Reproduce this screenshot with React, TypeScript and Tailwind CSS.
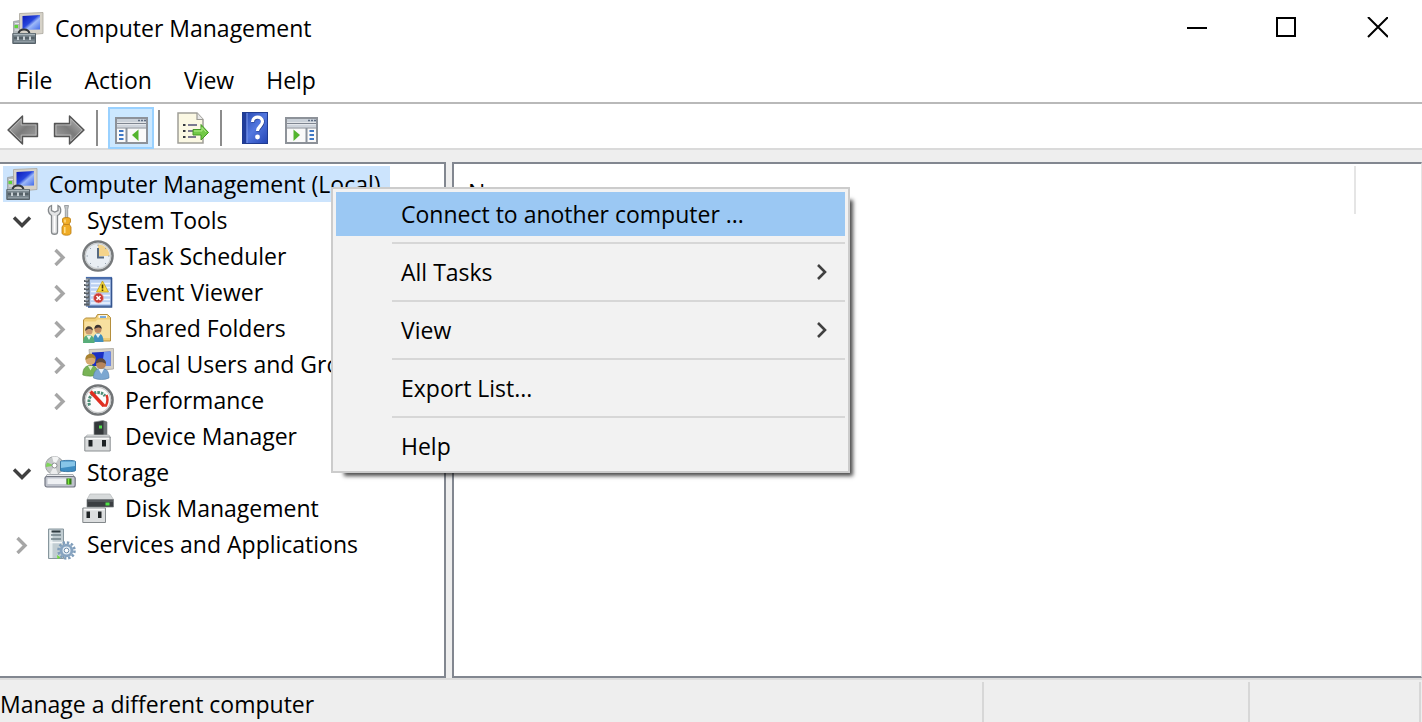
import type { ReactNode } from "react";

function ComputerIcon() {
  return (
    <svg viewBox="0 0 32 32" className="size-8 shrink-0" aria-hidden="true">
      <defs>
        <linearGradient id="screen" x1="0" y1="0" x2="1" y2="1">
          <stop offset="0" stopColor="#0a17b8" />
          <stop offset=".45" stopColor="#2746dc" />
          <stop offset=".6" stopColor="#9db9f8" />
          <stop offset="1" stopColor="#3f68ea" />
        </linearGradient>
      </defs>
      <path d="M1.500 9.500l6-1v14h-6z" fill="#b4babd" stroke="#8d9498" strokeWidth=".7" />
      <path d="M3 11.500h4M3 18h4" stroke="#e4e8ea" />
      <rect x="2.500" y="13" width="3.500" height="3" fill="#5fd53a" />
      <path d="M7.500 1.500L31 .5V21.500L20 22.500L7.500 21z" fill="#d6d2c8" stroke="#aaa69c" strokeWidth=".8" />
      <path d="M10.500 4L28 3V17.500L10.500 18z" fill="url(#screen)" />
      <path d="M6.500 21.500c1-5.500 10-5.500 11 0" fill="none" stroke="#33373a" strokeWidth="2" />
      <path d="M.8 21.500h22.700v10H.8z" fill="#6f7c84" stroke="#566168" />
      <path d="M1.500 22.500h21.500" stroke="#a9b5bb" strokeWidth="1.500" />
      <path d="M2 26h20.500" stroke="#4c585f" strokeWidth="1.500" />
      <path d="M6 24.500v3.500M12 24.500v3.500M18 24.500v3.500" stroke="#d3dbdf" strokeWidth="1.800" />
      <path d="M2 29.500h20.500" stroke="#8f9ba2" strokeWidth="1.500" />
    </svg>
  );
}

function ToolsIcon() {
  return (
    <svg viewBox="0 0 32 32" className="size-8 shrink-0" aria-hidden="true">
      <path
        d="M7.500 1.500C5 2.500 4 5 4.500 7.500c.5 2.500 2 3.500 3 4V28c0 3 6 3 6 0V11.500c2-1 3.500-3 3.200-6C16.500 3.500 15.500 2 14 1.500v5L10.800 8 7.500 6.500z"
        fill="#e3e4e5"
        stroke="#85898c"
        strokeWidth="1.300"
      />
      <path d="M10.500 12v16" stroke="#fff" strokeWidth="1.500" />
      <path d="M20.500 1.500h4l-.8 4v8h-2.400v-8z" fill="#c4c8ca" stroke="#8a8e91" strokeWidth=".8" />
      <path d="M18.500 15c0-2 8-2 8 0v3L25 20l2 3v6c0 3-9 3-9 0v-6l2-3-1.500-2z" fill="#f0ac26" stroke="#b97c12" strokeWidth=".8" />
      <path d="M21 15.500v3M20.800 23v6" stroke="#ffe08a" strokeWidth="1.500" />
      <path d="M19.500 20.500h6" stroke="#c8861a" />
    </svg>
  );
}

function ClockIcon() {
  return (
    <svg viewBox="0 0 32 32" className="size-8 shrink-0" aria-hidden="true">
      <circle cx="16" cy="16" r="14.500" fill="#e9eef3" stroke="#76797b" strokeWidth="2.600" />
      <circle cx="16" cy="16" r="12.700" fill="none" stroke="#c9cccd" strokeWidth="1.200" />
      <path d="M16 16V4.500A11.500 11.500 0 0 1 27.500 16z" fill="#f4d38a" />
      <path d="M16 8V17.500H22" fill="none" stroke="#56697f" strokeWidth="2" />
      <path d="M16 4.500v1.500M16 26v1.500M4.500 16H6M26 16h1.500M8 8l1 1M23 23l1 1M8 24l1-1M24 8l-1 1" stroke="#98a4b1" />
    </svg>
  );
}

function EventIcon() {
  return (
    <svg viewBox="0 0 32 32" className="size-8 shrink-0" aria-hidden="true">
      <rect x="4.500" y="1.500" width="25" height="28.500" fill="#b9cff2" stroke="#456aa9" strokeWidth="1.200" />
      <path d="M5 2.500h24" stroke="#4c6fae" strokeWidth="2" />
      <path d="M9 7.500h19M9 11.500h19M9 15.500h19M9 19.500h19M9 23.500h19M9 27h19" stroke="#eef5ff" strokeWidth="1.500" />
      <path d="M29.500 2v29H6" fill="none" stroke="#35558e" strokeWidth="1.500" />
      <rect x="4" y="2" width="4" height="28" fill="#768495" />
      <path d="M2 5h5M2 9h5M2 13h5M2 17h5M2 21h5M2 25h5M2 28.500h5" stroke="#5b6167" strokeWidth="1.800" />
      <path d="M3 4h3M3 8h3M3 12h3M3 16h3M3 20h3M3 24h3" stroke="#e3e6e8" strokeWidth=".8" />
      <path d="M20.500 5L26.500 16h-12z" fill="#f8db3c" stroke="#c39f1d" strokeWidth=".8" />
      <path d="M20.500 8.500v4M20.500 13.500v1.500" stroke="#4b3d09" strokeWidth="1.600" />
      <circle cx="16.500" cy="22" r="5" fill="#cb3935" stroke="#e4a5a2" strokeWidth=".8" />
      <path d="M14.500 20l4 4m0-4l-4 4" stroke="#fff" strokeWidth="1.600" />
    </svg>
  );
}

function SharedIcon() {
  return (
    <svg viewBox="0 0 32 32" className="size-8 shrink-0" aria-hidden="true">
      <path d="M1.500 8l2-2h10l2-3.500h10l3 3V29h-27z" fill="#f0ce77" stroke="#b58f3d" />
      <path d="M16.500 4.500h8.500" stroke="#fff" strokeWidth="2.500" />
      <path d="M18 5h6" stroke="#4b8fd6" strokeWidth="1.500" />
      <path d="M2.500 9.500h11l2-2H28V26H2.500z" fill="#f8e0a0" />
      <path d="M11 30c0-6 2-8.500 5-8.500s5.500 2 5.500 8.500z" fill="#418fbe" />
      <path d="M13.500 22l2.500 4 2.500-4z" fill="#e8f2f8" />
      <circle cx="16" cy="17.500" r="3.500" fill="#c08b63" />
      <path d="M12.300 17c0-6 7.500-5.500 7.500 0-2-2-5-2-7.500 0z" fill="#3a3230" />
      <path d="M1 31c0-6 2.500-8 5.800-8s5.800 2.500 5.800 8z" fill="#58ad7a" />
      <path d="M4.500 23.500L7 28l2.500-4.500z" fill="#eaf7ee" />
      <circle cx="7" cy="19" r="3.600" fill="#c99a72" />
      <path d="M3.200 19c-.5-6.500 7.500-6 7.800-.5-2-2-5-2.500-7.800.5z" fill="#49403a" />
    </svg>
  );
}

function UsersIcon() {
  return (
    <svg viewBox="0 0 32 32" className="size-8 shrink-0" aria-hidden="true">
      <path d="M7 1.500L31.500 .5V21L9 23z" fill="#d5d1c8" stroke="#aaa69e" strokeWidth=".8" />
      <path d="M10 4.500L28.500 3.500V18H10z" fill="#1b2fc4" />
      <path d="M22 4l6.500-.5V18H20z" fill="#6e94f2" />
      <path d="M.8 27c0-7 3-9.500 7.500-9.500s7.500 2 7.500 9.500c-4 1.500-11 1.500-15 0z" fill="#78b355" stroke="#528938" strokeWidth=".6" />
      <path d="M6 18l2.500 4.500L11 18z" fill="#dff0d0" />
      <circle cx="8.500" cy="12" r="5" fill="#d8aa72" />
      <path d="M3.500 12c-1-8 10.500-8.500 10.500-.5-3-2.500-6.500-2.500-10.500.5z" fill="#a98332" />
      <path d="M11.500 30c0-6.500 2.500-9.500 8-9.500s7.500 3 7.500 9.500c-4 2-11 2-15.500 0z" fill="#7ba7d1" stroke="#547fa9" strokeWidth=".6" />
      <path d="M16.500 21l2.800 5 2.700-5z" fill="#eaf3fb" />
      <circle cx="19" cy="16" r="5" fill="#b9865c" />
      <path d="M14 15.500c-.5-7 10.500-7 10 .5-3-2-6-2.500-10-.5z" fill="#5d4a3f" />
    </svg>
  );
}

function PerformanceIcon() {
  return (
    <svg viewBox="0 0 32 32" className="size-8 shrink-0" aria-hidden="true">
      <circle cx="16" cy="16" r="14.500" fill="#fcfcfc" stroke="#717476" strokeWidth="2.600" />
      <circle cx="16" cy="16" r="12.600" fill="none" stroke="#c6c8c9" strokeWidth="1.200" />
      <path d="M7.500 21.500C5.500 15 9 9 15 8.500c3.500 0 6 .8 8 3.500" fill="none" stroke="#4d8d76" strokeWidth="3" strokeDasharray="2.500 1" />
      <path d="M24.500 11c1.500 3.500 1.300 7-.5 10.500h-4" fill="none" stroke="#df3527" strokeWidth="2.500" />
      <path d="M8.500 7.500L21.500 21.500" stroke="#e02e20" strokeWidth="3.400" />
    </svg>
  );
}

function DeviceIcon() {
  return (
    <svg viewBox="0 0 32 32" className="size-8 shrink-0" aria-hidden="true">
      <path d="M12 2l9-1.500 4 1.500v14H12z" fill="#34383b" stroke="#8c9194" strokeWidth=".7" />
      <path d="M21.500 1v15H25V2z" fill="#6b7073" />
      <path d="M17 5.500h3v3h-3z" fill="#51e04c" />
      <path d="M5 15h22l1.500 2.500h-25z" fill="#e3e6e7" stroke="#aeb2b4" strokeWidth=".8" />
      <path d="M2.800 17h25.400v14H2.800z" fill="#d9dbdc" stroke="#8a8f92" />
      <path d="M4 18.500h23" stroke="#f9fafa" strokeWidth="1.500" />
      <path d="M6.500 20h4v6.500h-4zM20 20h4v6.500h-4z" fill="#1e2224" />
    </svg>
  );
}

function StorageIcon() {
  return (
    <svg viewBox="0 0 32 32" className="size-8 shrink-0" aria-hidden="true">
      <circle cx="10.500" cy="9.500" r="9" fill="#c4c7c8" stroke="#8e9294" strokeWidth=".8" />
      <path d="M10.500 9.500L3 6.500A9 9 0 0 0 2 11z" fill="#7fd45a" />
      <path d="M10.500 9.500L8 .8a9 9 0 0 1 7 1z" fill="#f4f5f5" />
      <path d="M10.500 9.500L6 17.500a9 9 0 0 0 8 .3z" fill="#ecedee" />
      <circle cx="10.500" cy="9.500" r="2.500" fill="#fff" stroke="#8c8f91" />
      <path d="M16.500 5.500c0-1.500 15-1.500 15 0v9c0 1.500-15 1.500-15 0z" fill="#3e8dc2" stroke="#286a9b" strokeWidth=".8" />
      <path d="M17 5.500h14v4.500L17 12z" fill="#87c5e8" />
      <path d="M3 18.500h26l2 4H1z" fill="#e9ebee" stroke="#9b9fa6" strokeWidth=".8" />
      <rect x="1" y="20.500" width="30.200" height="10.500" rx="2" fill="#bfc3cc" stroke="#737783" strokeWidth="1.200" />
      <rect x="3.500" y="22.500" width="18.500" height="5.500" fill="#eef0f3" />
      <rect x="22.500" y="22.500" width="5" height="6" fill="#347c16" />
      <path d="M24.500 22.500v6" stroke="#7be63b" strokeWidth="1.600" />
    </svg>
  );
}

function DiskIcon() {
  return (
    <svg viewBox="0 0 32 32" className="size-8 shrink-0" aria-hidden="true">
      <path d="M8 2h20l3.500 5.500H5z" fill="#d7dadb" stroke="#b4b8ba" strokeWidth=".7" />
      <path d="M5 7.500h26.500v7.500H5z" fill="#3b3f42" stroke="#777c80" strokeWidth=".7" />
      <path d="M6 9h25" stroke="#6c7174" />
      <path d="M23.500 10.500h4v3h-4z" fill="#4fe046" />
      <path d="M.8 16h22.700v14.500H.8z" fill="#dcdedf" stroke="#83888b" />
      <path d="M2 17.500h20.500" stroke="#fafafa" strokeWidth="1.500" />
      <path d="M4.500 19.500H8v6.500H4.500zM16 19.500h3.500v6.500H16z" fill="#202426" />
    </svg>
  );
}

function ServicesIcon() {
  return (
    <svg viewBox="0 0 32 32" className="size-8 shrink-0" aria-hidden="true">
      <path d="M4.500 1h15v29.500h-15z" fill="#c1cdd2" stroke="#87969d" />
      <path d="M5.500 2h3v28h-3z" fill="#e7eef0" />
      <path d="M7.500 3.500h9" stroke="#2f3b41" strokeWidth="2" />
      <path d="M7 7h10M7 11h10" stroke="#6f8088" strokeWidth="1.400" />
      <path d="M6 14.500h13" stroke="#f4f7f8" strokeWidth="1.500" />
      <circle cx="22.500" cy="22.500" r="8" fill="none" stroke="#7f9dba" strokeWidth="2.600" strokeDasharray="2.400 1.800" />
      <circle cx="22.500" cy="22.500" r="5.400" fill="#e3ecf4" stroke="#86a3c0" strokeWidth="2.800" />
      <circle cx="22.500" cy="22.500" r="2.300" fill="#fff" stroke="#55789c" strokeWidth=".8" />
      <path d="M13 27l3.500 2.500-3 1.500z" fill="#70dc3b" />
    </svg>
  );
}

function ArrowIcon({ forward = false }: { forward?: boolean }) {
  return (
    <svg viewBox="0 0 32 30" className="h-[30px] w-8" aria-hidden="true">
      <defs>
        <linearGradient id="arrow" x1="0" y1="0" x2="1" y2="1">
          <stop offset="0" stopColor="#c4c4c4" />
          <stop offset=".5" stopColor="#7b7b7b" />
          <stop offset="1" stopColor="#a9a9a9" />
        </linearGradient>
      </defs>
      <g transform={forward ? "translate(32 0) scale(-1 1)" : undefined}>
        <path d="M1 15L15.500 1V8.500H30.500V21.500H15.500V29z" fill="url(#arrow)" stroke="#555" strokeWidth="1.400" strokeLinejoin="round" />
        <path d="M3 15L14.200 4V10H29V20H14.200V26z" fill="none" stroke="#bdbdbd" strokeWidth=".8" />
      </g>
    </svg>
  );
}

function PaneIcon({ right = false }: { right?: boolean }) {
  return (
    <svg viewBox="0 0 33 27" className="h-[27px] w-[33px]" aria-hidden="true">
      <rect x="1" y="1" width="31" height="25" fill="#fafafa" stroke="#8d9299" strokeWidth="2" />
      <rect x="2" y="2" width="29" height="3.500" fill="#c9d0d8" />
      <path d="M23 3.500h2M26 3.500h2M29 3.500h2" stroke="#5f6d83" strokeWidth="1.600" />
      <path d="M2 6.500h29" stroke="#7e8590" />
      <path d="M2 9h29" stroke="#ced4dc" strokeWidth="3" />
      <path d="M2 11h29" stroke="#858b94" />
      {right ? (
        <>
          <path d="M21.500 11v14" stroke="#8b929c" strokeWidth="2" />
          <path d="M24.500 14h4.500M24.500 18h4.500M24.500 22h4.500" stroke="#3f78c5" strokeWidth="2" />
          <path d="M8.500 12.500L15 18l-6.500 6z" fill="#53b52e" />
        </>
      ) : (
        <>
          <path d="M11.500 11v14" stroke="#8b929c" strokeWidth="2" />
          <path d="M4 14h4.500M4 18h4.500M4 22h4.500" stroke="#3f78c5" strokeWidth="2" />
          <path d="M23.500 12.500L17 18l6.500 6z" fill="#53b52e" />
        </>
      )}
    </svg>
  );
}

function ExportIcon() {
  return (
    <svg viewBox="0 0 32 32" className="size-8" aria-hidden="true">
      <path d="M1 1h19l6 6.500V31H1z" fill="#fbf8e3" stroke="#a09f98" strokeWidth="1.500" />
      <path d="M20 1v6.500h6" fill="#e8e8e8" stroke="#9b9a94" strokeWidth="1.200" />
      <path d="M6 13h2.500M6 19h2.500M6 25h2.500" stroke="#353840" strokeWidth="2.200" />
      <path d="M11 13h9M11 19h8M11 25h8" stroke="#7c7a90" strokeWidth="2" />
      <path d="M16 17.500h8v-5l7.500 8-7.500 7.500v-5H16z" fill="#72c947" stroke="#459826" />
      <path d="M17 19h8v-3.500l4 4.500" fill="none" stroke="#b1ec89" />
    </svg>
  );
}

function HelpIcon() {
  return (
    <svg viewBox="0 0 26 32" className="h-8 w-[26px]" aria-hidden="true">
      <defs>
        <linearGradient id="book" x1="0" y1="0" x2="1" y2="1">
          <stop offset="0" stopColor="#2244ad" />
          <stop offset=".5" stopColor="#5277df" />
          <stop offset="1" stopColor="#2546b5" />
        </linearGradient>
      </defs>
      <rect x=".5" y=".5" width="25" height="31" fill="url(#book)" stroke="#203c91" />
      <path d="M1 1h3.500v30H1z" fill="#203c9b" />
      <path d="M5 1v30" stroke="#7f9aeb" />
      <path d="M11 10.500c0-6.500 10-6.500 10-.5 0 4.500-5 5-5 9.500" fill="none" stroke="#1c3584" strokeWidth="3.200" />
      <path d="M10.500 10c0-6.500 10-6.500 10-.5 0 4.500-5 5-5 9.500" fill="none" stroke="#fff" strokeWidth="3.200" />
      <circle cx="15.500" cy="25" r="2.400" fill="#fff" />
    </svg>
  );
}

function Chevron({ open }: { open: boolean }) {
  return (
    <svg viewBox="0 0 20 20" className="size-5" fill="none" strokeWidth="3.400" aria-hidden="true">
      {open ? <path d="M2 7.500l8 8 8-8" stroke="#404040" /> : <path d="M5.500 4l7.500 7.500L5.500 19" stroke="#a6a6a6" />}
    </svg>
  );
}

type Node = { label: string; icon: ReactNode; open?: boolean; leaf?: boolean; children?: Node[] };

const tree: Node[] = [
  {
    label: "System Tools",
    icon: <ToolsIcon />,
    open: true,
    children: [
      { label: "Task Scheduler", icon: <ClockIcon /> },
      { label: "Event Viewer", icon: <EventIcon /> },
      { label: "Shared Folders", icon: <SharedIcon /> },
      { label: "Local Users and Groups", icon: <UsersIcon /> },
      { label: "Performance", icon: <PerformanceIcon /> },
      { label: "Device Manager", icon: <DeviceIcon />, leaf: true },
    ],
  },
  {
    label: "Storage",
    icon: <StorageIcon />,
    open: true,
    children: [{ label: "Disk Management", icon: <DiskIcon />, leaf: true }],
  },
  { label: "Services and Applications", icon: <ServicesIcon /> },
];

function Branch({ nodes }: { nodes: Node[] }) {
  return (
    <ul>
      {nodes.map((node) => (
        <li key={node.label}>
          <div className="flex h-9 items-center">
            {node.leaf ? (
              <span className="mr-1.5 w-8 shrink-0" />
            ) : (
              <button type="button" aria-label={`Toggle ${node.label}`} className="mr-1.5 flex w-8 shrink-0 justify-center">
                <Chevron open={!!node.open} />
              </button>
            )}
            {node.icon}
            <span className="ml-[11px] whitespace-nowrap">{node.label}</span>
          </div>
          {node.children && (
            <div className="pl-[38px]">
              <Branch nodes={node.children} />
            </div>
          )}
        </li>
      ))}
    </ul>
  );
}

function ToolButton({ label, active = false, low = false, children }: { label: string; active?: boolean; low?: boolean; children: ReactNode }) {
  return (
    <button
      type="button"
      aria-label={label}
      className={
        active
          ? "flex h-[42px] w-[46px] items-center justify-center border-2 border-[#99d1ff] bg-[#cce8ff] pt-1"
          : low
            ? "flex h-[42px] w-[46px] items-center justify-center pt-1"
            : "flex h-[42px] w-[46px] items-center justify-center"
      }
    >
      {children}
    </button>
  );
}

function ToolDivider() {
  return <span className="mr-2.5 ml-1 h-9 w-0.5 bg-[#8c8c8c]" />;
}

const menuItems = [
  { label: "Connect to another computer ...", selected: true },
  { label: "All Tasks", submenu: true },
  { label: "View", submenu: true },
  { label: "Export List..." },
  { label: "Help" },
];

function ContextMenu() {
  return (
    <div
      role="menu"
      className="absolute top-[187px] left-[331px] w-[519px] border-2 border-[#cccccc] bg-[#f2f2f2] p-[3px] shadow-[8px_8px_4px_-5px_rgba(0,0,0,0.7)]"
    >
      {menuItems.map((item, i) => (
        <div key={item.label}>
          {i > 0 && (
            <div className="flex h-3.5 items-center pl-14">
              <div className="h-0.5 w-full bg-[#d7d7d7]" />
            </div>
          )}
          <button
            type="button"
            role="menuitem"
            className={
              item.selected
                ? "flex h-11 w-full items-center justify-between bg-[#9bc8f3] pr-4 pl-[65px]"
                : "flex h-11 w-full items-center justify-between pr-4 pl-[65px]"
            }
          >
            {item.label}
            {item.submenu && (
              <svg viewBox="0 0 16 16" className="size-4" fill="none" aria-hidden="true">
                <path d="M5 1l7 7-7 7" stroke="#404040" strokeWidth="2.600" />
              </svg>
            )}
          </button>
        </div>
      ))}
    </div>
  );
}

export default function App() {
  return (
    <div className="relative flex h-screen flex-col overflow-hidden bg-white font-['Open_Sans','Noto_Sans',sans-serif] text-[23px] leading-8 text-black">
      <header className="flex h-14 items-center">
        <span className="ml-3">
          <ComputerIcon />
        </span>
        <h1 className="ml-[11px] grow">Computer Management</h1>
        <button type="button" aria-label="Minimize" className="flex h-full w-[90px] items-center justify-center">
          <svg viewBox="0 0 22 22" className="size-[22px]" aria-hidden="true">
            <path d="M1 11h20" stroke="#000" strokeWidth="2" />
          </svg>
        </button>
        <button type="button" aria-label="Maximize" className="flex h-full w-[90px] items-center justify-center">
          <svg viewBox="0 0 22 22" className="size-[22px]" aria-hidden="true">
            <rect x="1" y="1" width="18" height="18" fill="none" stroke="#000" strokeWidth="2" />
          </svg>
        </button>
        <button type="button" aria-label="Close" className="flex h-full w-[90px] items-center justify-center">
          <svg viewBox="0 0 22 22" className="size-[22px]" aria-hidden="true">
            <path d="M2 0l20 20M22 0L2 20" stroke="#000" strokeWidth="2" />
          </svg>
        </button>
      </header>

      <nav className="flex h-12 items-center border-b-2 border-[#b9b9b9] pt-0.5">
        {["File", "Action", "View", "Help"].map((name) => (
          <button key={name} type="button" className="px-4">
            {name}
          </button>
        ))}
      </nav>

      <div className="flex h-[46px] items-center border-b-2 border-[#dadada] pt-1">
        <ToolButton label="Back" low>
          <ArrowIcon />
        </ToolButton>
        <ToolButton label="Forward" low>
          <ArrowIcon forward />
        </ToolButton>
        <ToolDivider />
        <ToolButton label="Show or hide console tree" active>
          <PaneIcon />
        </ToolButton>
        <ToolDivider />
        <ToolButton label="Export list">
          <ExportIcon />
        </ToolButton>
        <ToolDivider />
        <ToolButton label="Help topics">
          <HelpIcon />
        </ToolButton>
        <ToolButton label="Show or hide action pane" low>
          <PaneIcon right />
        </ToolButton>
      </div>

      <main className="flex min-h-0 grow gap-1.5 bg-[#eeeeee] pt-3">
        <section className="w-[446px] shrink-0 overflow-hidden border-2 border-l-0 border-[#828790] bg-white pt-0.5">
          <div className="ml-[3px] flex h-9 w-[387px] items-center bg-[#cce4fd] pl-[3px]">
            <ComputerIcon />
            <span className="ml-[11px] whitespace-nowrap">Computer Management (Local)</span>
          </div>
          <div className="pl-1.5">
            <Branch nodes={tree} />
          </div>
        </section>
        <section className="grow border-2 border-r border-[#828790] border-r-[#e5e5e5] bg-white pt-0.5">
          <table className="w-full">
            <thead>
              <tr className="h-12">
                <th className="border-r-2 border-[#e5e5e5] pt-1 pl-3.5 text-left font-normal">Name</th>
                <th className="w-[66px]" />
              </tr>
            </thead>
          </table>
        </section>
      </main>

      <footer className="flex h-11 items-stretch border-t-2 border-[#dcdcdc] bg-[#eeeeee] pt-0.5">
        <span className="flex grow items-center pt-1">Manage a different computer</span>
        <span className="w-[266px] border-l-2 border-[#d7d7d7]" />
        <span className="mr-px w-[173px] border-x-2 border-[#d7d7d7]" />
      </footer>

      <ContextMenu />
    </div>
  );
}
